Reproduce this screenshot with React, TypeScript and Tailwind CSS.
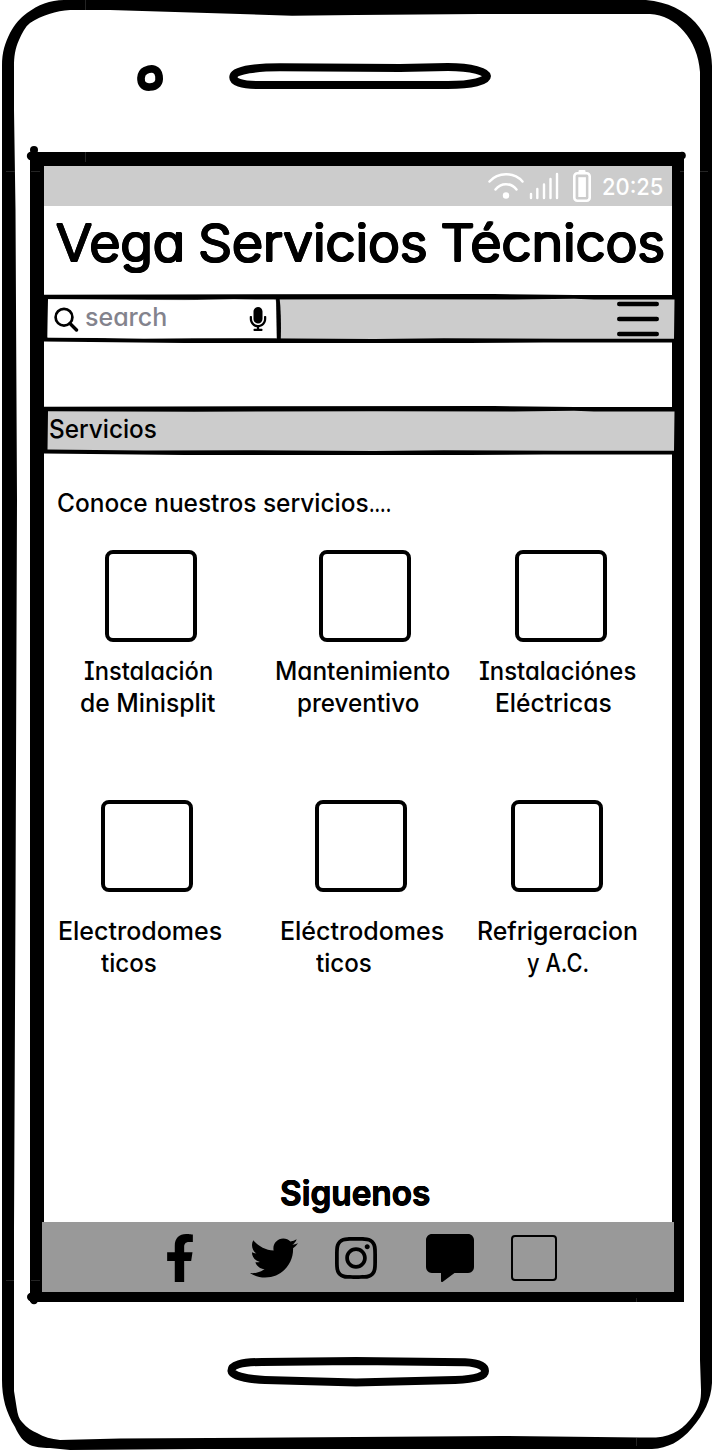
import { useLayoutEffect, useRef, useState } from "react";
import { FaCommentAlt, FaFacebookF, FaInstagram, FaMicrophone, FaTwitter } from "react-icons/fa";

/** A single line of text stretched or condensed to fill the width of its box. */
function FitText({ className, children }: { className: string; children: string }) {
  const box = useRef<HTMLDivElement>(null);
  const line = useRef<HTMLSpanElement>(null);
  const [scale, setScale] = useState(1);

  useLayoutEffect(() => {
    if (box.current && line.current) {
      setScale(box.current.offsetWidth / line.current.offsetWidth);
    }
  }, [children]);

  return (
    <div ref={box} className={className}>
      <span
        ref={line}
        className="inline-block origin-left align-top whitespace-nowrap"
        style={{ transform: `scaleX(${scale})` }}
      >
        {children}
      </span>
    </div>
  );
}

function PhoneFrame() {
  return (
    <svg className="absolute inset-0" width="712" height="1450" viewBox="0 0 712 1450" aria-hidden="true">
      <path
        fillRule="evenodd"
        d="M2 66C2 52 5 43 10 33C15 24 20 18 27 13C38 5 50 0 64 0H646C690 4 712 34 712 66V1383C711 1400 704 1414 692 1428C680 1442 668 1448 652 1449L460 1449L200 1449L70 1450L50 1448C41 1448 35 1447 30 1445C23 1441 19 1436 15 1427C6 1412 2 1398 2 1380Z
        M14 66V110L15.5 210L17 500L15.500 900L14 1230V1391L16.700 1408C17.500 1414 19 1419 22 1422C27 1428 32 1431 37 1433C44 1437 51 1439 60 1440L120 1438.5L356 1437L500 1436L640 1437.5H656C674 1436 684 1428 693 1416C700 1406 701 1400 701 1390L700 1360V72C698 40 676 15 650 14H480L356 15L292 15.700L110 10H70C56 11 42 15 30 23C25 27 22 33 19 40C15 49 14 57 14 66Z"
      />
      <path fillRule="evenodd" d="M30 152H684V1302H30ZM44 166V1222H42V1292H674V1222H672V166Z" />
      <circle cx="34" cy="150" r="4" />
      <circle cx="31" cy="156" r="4.2" />
      <circle cx="682" cy="155.5" r="3.8" />
      <circle cx="31.2" cy="1297" r="4.2" />
      <circle cx="34" cy="1300" r="4.2" />
      <g fill="none" stroke="#000" strokeWidth="8">
        <path
          strokeWidth="7.700"
          d="M145.500 70.500C152 67.500 158 68.500 159 76C160 83 156.500 87 150 87C143 87.500 140.800 83 141 78C141.200 74 142.500 72 145.500 70.500Z"
        />
        <path d="M233.500 76C235 70 258 67.300 280 67.300L400 68L448 67C472 67 487 72 487 76C487 81 472 85 448 85H258C242 85 232 82 233.500 76Z" />
        <path d="M231.500 1371C231 1365 241 1362 262 1362L356 1361L465 1362.300C480 1363 485 1367 485 1371C485 1376 477 1379 455 1380L356 1382.500L265 1380C244 1379 232 1375 231.500 1371Z" />
      </g>
      <path
        stroke="#333"
        strokeWidth="0.7"
        d="M85.500 0V10M85.500 152V162M6 171.500H15M31 171.500H40M680 171.500H684M700 171.500H708M6 1280.500H14M31 1280.500H40M636.500 1298V1302M636.500 1438V1446"
      />
    </svg>
  );
}

function BarOutline({ search = false }: { search?: boolean }) {
  return (
    <svg className="absolute inset-0" width="632" height="49" viewBox="0 0 632 49" aria-hidden="true">
      <path d="M0 0.800L120 0.400L450 0L530 1H632V48.600H500L330 49.500L140 49L0 47.500Z" />
      <path
        fill="#ccc"
        d="M4 5.300L150 5.800L330 5.200L470 5.600L530 4.800L550 5.600H630.500L630 44.700H520L400 44.300L330 45L200 44.300L100 44.500L3.500 43.500Z"
      />
      {search && (
        <>
          <path fill="#fff" d="M4 5.300L140 6.200L190 5.200L215 5.800H230.500Q232 6 232 9V44H150L100 44.500L60 44L3.500 43.500Z" />
          <path d="M232 3L235.500 3Q237.500 20 236.800 46H233Z" />
        </>
      )}
    </svg>
  );
}

function StatusBar() {
  return (
    <div className="flex h-10 items-center bg-[#ccc] pl-[443px]">
      <svg width="106" height="34" viewBox="487 169 106 34" fill="none" stroke="#fff" strokeLinecap="round">
        <path strokeWidth="2.500" d="M489.500 181.500C498 171.800 514 171.800 522.500 181.500M495.500 189.500C501 182.500 511 182.500 516.500 189.500" />
        <circle cx="506" cy="195.500" r="3.200" fill="#fff" stroke="none" />
        <path strokeWidth="2.400" d="M531 194V198M537.300 189V198M544 184.500V198M550.500 179V198M557 174V198" />
        <rect x="574.300" y="173.300" width="15.400" height="27.400" rx="3" strokeWidth="2.600" />
        <rect x="578.500" y="170" width="7" height="3" rx="1" fill="#fff" stroke="none" />
        <rect x="578.300" y="177.200" width="7.600" height="19.800" fill="#fff" stroke="none" />
      </svg>
      <FitText className="ml-[9px] w-[61px] pt-px text-[23px] leading-8 font-medium text-white">20:25</FitText>
    </div>
  );
}

function Toolbar() {
  return (
    <div className="relative h-[49px] w-[632px]">
      <BarOutline search />
      <div className="relative flex h-full items-center">
        <svg className="ml-[9px]" width="26" height="26" viewBox="0 0 26 26" fill="none" stroke="#000">
          <circle cx="11" cy="11.200" r="8.400" strokeWidth="2.700" />
          <path d="M17 17.500L23.500 24" strokeWidth="3.400" strokeLinecap="round" />
        </svg>
        <FitText className="ml-[6px] w-[82px] pb-[3px] text-[25px] leading-8 font-medium text-[#83838d]">search</FitText>
        <FaMicrophone className="ml-[82px] h-6 w-[18px]" />
        <svg className="ml-[350px]" width="42" height="36" viewBox="0 0 42 36" stroke="#000" strokeWidth="4.400" strokeLinecap="round">
          <path d="M2.200 3H39.800M2.200 18H39.800M2.200 33H39.800" />
        </svg>
      </div>
    </div>
  );
}

type Service = { lines: { text: string; box: string }[] };

const topServices: Service[] = [
  { lines: [{ text: "Instalación", box: "ml-[40px] w-[129px]" }, { text: "de Minisplit", box: "ml-[36px] w-[135px]" }] },
  { lines: [{ text: "Mantenimiento", box: "ml-[17px] w-[175px]" }, { text: "preventivo", box: "ml-[39px] w-[122px]" }] },
  { lines: [{ text: "Instalaciónes", box: "ml-[25px] w-[157px]" }, { text: "Eléctricas", box: "ml-[41px] w-[117px]" }] },
];

const bottomServices: Service[] = [
  { lines: [{ text: "Electrodomes", box: "ml-[14px] w-[164px]" }, { text: "ticos", box: "ml-[57px] w-[56px]" }] },
  { lines: [{ text: "Eléctrodomes", box: "ml-[22px] w-[164px]" }, { text: "ticos", box: "ml-[58px] w-[56px]" }] },
  { lines: [{ text: "Refrigeracion", box: "ml-[23px] w-[161px]" }, { text: "y A.C.", box: "ml-[73px] w-[62px]" }] },
];

function ServiceRow({ services, tile, caption }: { services: Service[]; tile: string; caption: string }) {
  return (
    <div className="grid grid-cols-[214px_196px_218px]">
      {services.map((service, i) => (
        <div key={i}>
          <div className={`${tile} size-[92px] rounded-lg border-4 border-black`} />
          <div className={caption}>
            {service.lines.map((line) => (
              <FitText key={line.text} className={line.box}>
                {line.text}
              </FitText>
            ))}
          </div>
        </div>
      ))}
    </div>
  );
}

export default function App() {
  return (
    <div className="relative h-[1450px] w-[712px] overflow-hidden bg-white font-['Inter','Open_Sans',sans-serif] text-black [font-feature-settings:'cv11','cv08']">
      <PhoneFrame />
      <main className="relative ml-[44px] flex w-[628px] flex-col pt-[166px] text-[25px] leading-8 font-medium">
        <StatusBar />
        <h1 className="h-[88px] pt-[7px]">
          <FitText className="ml-[12px] w-[609px] text-[51px] leading-[60px] font-light [word-spacing:-2px] [text-shadow:1.3px_0_#000,-1.3px_0_#000,0_1.3px_#000,0_-1.3px_#000,0.9px_0.9px_#000,-0.9px_0.9px_#000,0.9px_-0.9px_#000,-0.9px_-0.9px_#000]">
            Vega Servicios Técnicos
          </FitText>
        </h1>
        <Toolbar />
        <div className="relative mt-[63px] h-[49px] w-[632px]">
          <BarOutline />
          <h2 className="relative pt-[7px]">
            <FitText className="ml-[5px] w-[108px]">Servicios</FitText>
          </h2>
        </div>
        <div className="mt-8 mb-[31px] flex">
          <FitText className="ml-[13px] w-[312px]">Conoce nuestros servicios</FitText>
          <FitText className="w-[22px]">....</FitText>
        </div>
        <ServiceRow services={topServices} tile="ml-[61px]" caption="mt-[13px]" />
        <div className="mt-[81px]">
          <ServiceRow services={bottomServices} tile="ml-[57px]" caption="mt-[23px]" />
        </div>
        <h3 className="mt-[194px]">
          <FitText className="ml-[236px] w-[150px] text-[34px] leading-10 font-semibold [text-shadow:0.5px_0_#000,-0.5px_0_#000,0_0.5px_#000,0_-0.5px_#000]">
            Siguenos
          </FitText>
        </h3>
        <footer className="mt-[9px] -ml-[2px] flex h-[70px] w-[632px] items-center bg-[#999] pt-[2px] pl-[123px]">
          <FaFacebookF className="h-12 w-[30px]" />
          <FaTwitter className="ml-[55px] size-12" />
          <FaInstagram className="ml-[37px] h-12 w-[42px]" />
          <FaCommentAlt className="ml-[49px] size-12" />
          <div className="ml-[37px] size-[46px] rounded border-2 border-black" />
        </footer>
      </main>
    </div>
  );
}
